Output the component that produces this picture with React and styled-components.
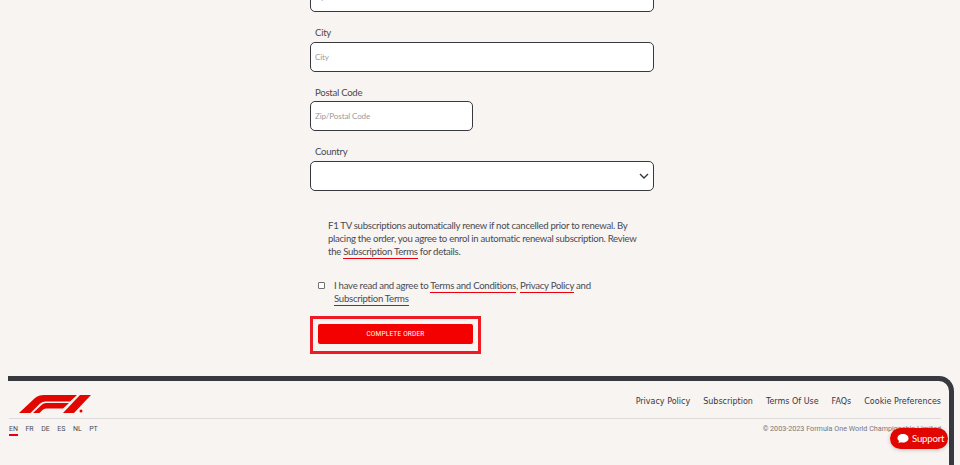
import styled, { createGlobalStyle } from "styled-components";

const GlobalStyle = createGlobalStyle`
  html, body {
    margin: 0;
    height: 465px;
    overflow: hidden;
    background: #f7f4f1;
    font-family: "Lato", "Liberation Sans", sans-serif;
    color: #38383f;
  }
  * { box-sizing: border-box; }
`;

const Page = styled.div`
  height: 465px;
  overflow: hidden;
  position: relative;
  display: flex;
  flex-direction: column;
`;

const Form = styled.form`
  width: 344px;
  margin: -18px 0 0 310px;
  display: flex;
  flex-direction: column;
`;

const Field = styled.div`
  display: flex;
  flex-direction: column;
  margin-bottom: 11.5px;
`;

const Label = styled.label`
  font-size: 9.6px;
  line-height: 16px;
  letter-spacing: -0.27px;
  padding-left: 5px;
  margin: 1.5px 0 0.5px;
  color: #4a4a52;
`;

const Input = styled.input`
  width: ${(p) => p.$width || "100%"};
  height: 30px;
  border: 1px solid #38383f;
  border-radius: 5px;
  background: #fff;
  padding: 0 4px;
  font-family: inherit;
  font-size: 8px;
  letter-spacing: -0.1px;
  &::placeholder { color: #9a9aa0; }
`;

const SelectBox = styled.div`
  height: 30px;
  border: 1px solid #38383f;
  border-radius: 5px;
  background: #fff;
  display: flex;
  align-items: center;
  justify-content: flex-end;
  padding-right: 3px;
`;

const Notice = styled.p`
  margin: 17px 10px 0 18px;
  font-size: 9.6px;
  line-height: 13px;
  letter-spacing: -0.28px;
  color: #4a4a52;
`;

const TermLink = styled.a`
  border-bottom: 1px solid #e8000f;
  padding-bottom: 1px;
`;

const Agree = styled.div`
  display: flex;
  margin: 21px 20px 0 8px;
  gap: 9px;
  font-size: 9.6px;
  line-height: 13px;
  letter-spacing: -0.27px;
  color: #4a4a52;
`;

const Check = styled.span`
  flex: none;
  width: 7px;
  height: 7px;
  margin-top: 3px;
  background: #fff;
  border: 1px solid #6f6f76;
  border-radius: 1px;
`;

const OrderFrame = styled.div`
  width: 171px;
  height: 38px;
  margin-top: 10.5px;
  border: 3px solid #ed1c24;
  padding: 5px;
`;

const OrderButton = styled.button`
  display: block;
  width: 155px;
  height: 20px;
  padding: 0;
  border: 0;
  border-radius: 2px;
  background: #f30000;
  color: #fff;
  font-family: "Roboto", sans-serif;
  font-size: 6.5px;
  letter-spacing: 0.2px;
`;

const Footer = styled.footer`
  flex: 1;
  margin: 22px 6px 0 8px;
  padding: 0 8px 0 1px;
  border-top: 5px solid #38383f;
  border-right: 5px solid #38383f;
  border-top-right-radius: 15px;
`;

const FooterTop = styled.div`
  height: 38px;
  display: flex;
  align-items: flex-end;
  justify-content: space-between;
  padding: 0 0 5px 10px;
  border-bottom: 1px solid #dddbdc;
`;

const FooterLinks = styled.nav`
  display: flex;
  gap: 13px;
  margin-bottom: 7px;
  font-family: "DejaVu Sans", sans-serif;
  font-size: 8px;
  color: #38383f;
`;

const FooterBottom = styled.div`
  display: flex;
  justify-content: space-between;
  align-items: flex-start;
  padding-top: 5px;
  font-size: 7px;
`;

const Langs = styled.div`
  display: flex;
  gap: 7.5px;
  font-family: "Roboto", sans-serif;
`;

const Lang = styled.span`
  line-height: 10px;
  color: #4a4a52;
  border-bottom: 2px solid ${(p) => (p.$active ? "#e8000f" : "transparent")};
`;

const Copy = styled.span`
  line-height: 10px;
  color: #77777d;
  font-family: "Roboto", sans-serif;
  font-size: 7.2px;
`;

const Support = styled.button`
  position: absolute;
  left: 890px;
  top: 428px;
  width: 58px;
  height: 21px;
  display: flex;
  align-items: center;
  gap: 3px;
  padding: 0 0 0 7px;
  border: 0;
  border-radius: 11px;
  background: #e10600;
  color: #fff;
  font-family: inherit;
  font-size: 9.6px;
  letter-spacing: -0.2px;
  box-shadow: 0 1px 4px rgba(0, 0, 0, 0.2);
`;

const F1Logo = () => (
  <svg width="72" height="18" viewBox="0 0 72 18" style={{ display: "block" }}>
    <g fill="#e10600">
      <path d="M0 18 L16 3 Q19.5 0 25 0 H58 L51 6.5 H26 Q23 6.5 20.5 9 L11.5 18 Z" />
      <path d="M14 18 L22.5 10 Q24.5 8 27 8 H50 L44 13.5 H27 Q25 13.5 23.5 15 L20.5 18 Z" />
      <path d="M44 18 L61 0 H72 L55 18 Z" />
      <circle cx="62" cy="16" r="1.5" />
    </g>
  </svg>
);

const App = () => (
  <>
    <GlobalStyle />
    <Page>
      <Form>
        <Field>
          <Input placeholder="Optional" />
        </Field>
        <Field>
          <Label>City</Label>
          <Input placeholder="City" />
        </Field>
        <Field>
          <Label>Postal Code</Label>
          <Input $width="163px" placeholder="Zip/Postal Code" />
        </Field>
        <Field>
          <Label>Country</Label>
          <SelectBox>
            <svg width="12" height="12" viewBox="0 0 12 12" fill="none" stroke="#38383f" strokeWidth="1.4">
              <path d="M2 4 L6 8 L10 4" />
            </svg>
          </SelectBox>
        </Field>
        <Notice>
          F1 TV subscriptions automatically renew if not cancelled prior to renewal. By placing the order, you agree to
          enrol in automatic renewal subscription. Review the <TermLink>Subscription Terms</TermLink> for details.
        </Notice>
        <Agree>
          <Check />
          <span>
            I have read and agree to <TermLink>Terms and Conditions</TermLink>, <TermLink>Privacy Policy</TermLink> and{" "}
            <TermLink>Subscription Terms</TermLink>
          </span>
        </Agree>
        <OrderFrame>
          <OrderButton type="button">COMPLETE ORDER</OrderButton>
        </OrderFrame>
      </Form>
      <Footer>
        <FooterTop>
          <F1Logo />
          <FooterLinks>
            <span>Privacy Policy</span>
            <span>Subscription</span>
            <span>Terms Of Use</span>
            <span>FAQs</span>
            <span>Cookie Preferences</span>
          </FooterLinks>
        </FooterTop>
        <FooterBottom>
          <Langs>
            <Lang $active>EN</Lang>
            <Lang>FR</Lang>
            <Lang>DE</Lang>
            <Lang>ES</Lang>
            <Lang>NL</Lang>
            <Lang>PT</Lang>
          </Langs>
          <Copy>© 2003-2023 Formula One World Championship Limited</Copy>
        </FooterBottom>
      </Footer>
      <Support type="button">
        <svg width="12" height="11" viewBox="0 0 13 12" fill="#fff">
          <path d="M6.5 1 C10 1 12.5 3 12.5 5.7 C12.5 8.4 10 10.3 6.5 10.3 C5.7 10.3 5 10.2 4.3 10 L1.5 11 L2.2 8.7 C1 7.8 0.5 6.8 0.5 5.7 C0.5 3 3 1 6.5 1 Z" />
        </svg>
        Support
      </Support>
    </Page>
  </>
);

export default App;
